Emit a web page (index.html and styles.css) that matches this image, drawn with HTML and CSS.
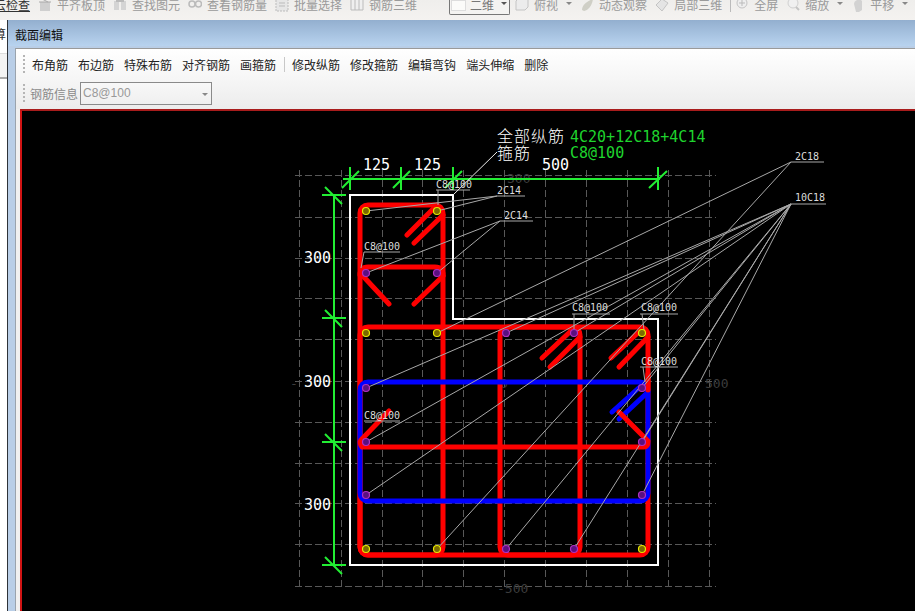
FILE: index.html
```html
<!DOCTYPE html>
<html lang="zh-CN">
<head>
<meta charset="utf-8">
<title>截面编辑</title>
<link rel="stylesheet" href="styles.css">
</head>
<body>
<header class="topbar">
  <span class="tb-text tb-first">云检查</span>
  <span class="tb-item"><svg class="tb-icon" viewBox="0 0 14 14"><rect x="2" y="4" width="10" height="9" fill="#cfcfcf"/><path d="M1 4h12M4 1l6 3" stroke="#aaa" fill="none"/></svg><span>平齐板顶</span></span>
  <span class="tb-item"><svg class="tb-icon" viewBox="0 0 14 14"><rect x="1" y="3" width="5" height="9" fill="#d4d4d4"/><rect x="8" y="3" width="5" height="9" fill="#d4d4d4"/><path d="M3 1h8v3H3z" fill="#bbb"/></svg><span>查找图元</span></span>
  <span class="tb-item"><svg class="tb-icon" viewBox="0 0 14 14"><circle cx="4" cy="6" r="3" fill="none" stroke="#bbb" stroke-width="1.5"/><circle cx="10.500" cy="6" r="3" fill="none" stroke="#bbb" stroke-width="1.5"/></svg><span>查看钢筋量</span></span>
  <span class="tb-item"><svg class="tb-icon" viewBox="0 0 14 14"><rect x="1" y="1" width="12" height="12" fill="#e6e6e6" stroke="#bbb" stroke-dasharray="2 1"/><path d="M4 5h6M4 8h6" stroke="#bbb"/></svg><span>批量选择</span></span>
  <span class="tb-item"><svg class="tb-icon" viewBox="0 0 14 14"><path d="M1 1h12v11H1zM5 1v11M9 1v11" fill="#efefef" stroke="#bbb"/></svg><span>钢筋三维</span></span>
  <span class="view-select"><i class="view-swatch"></i><span>二维</span><i class="arrow arrow-dark"></i></span>
  <span class="tb-item"><svg class="tb-icon" viewBox="0 0 14 14"><path d="M1 3l3-3h9v9l-3 3H1z" fill="#ececec" stroke="#c4c4c4"/></svg><span>俯视</span><i class="arrow"></i></span>
  <span class="tb-item"><svg class="tb-icon" viewBox="0 0 14 14"><path d="M2 12c0-5 5-9 11-11-1 6-4 11-9 12z" fill="#cfcfc6"/></svg><span>动态观察</span></span>
  <span class="tb-item"><svg class="tb-icon" viewBox="0 0 14 14"><path d="M1 7l6-6 6 4-6 8z" fill="#e4e4e4" stroke="#c4c4c4"/></svg><span>局部三维</span></span>
  <i class="tb-sep"></i>
  <span class="tb-item"><svg class="tb-icon" viewBox="0 0 14 14"><circle cx="7" cy="5" r="5" fill="#eee" stroke="#c4c4c4"/><path d="M4 5h6M7 2v6" stroke="#bbb"/></svg><span>全屏</span></span>
  <span class="tb-item"><svg class="tb-icon" viewBox="0 0 14 14"><circle cx="7" cy="5" r="5" fill="#f0f0f0" stroke="#d0d0d0"/><path d="M10 9l3 3" stroke="#c4c4c4" stroke-width="2"/></svg><span>缩放</span><i class="arrow"></i></span>
  <span class="tb-item"><svg class="tb-icon" viewBox="0 0 14 14"><path d="M3 6c0-4 6-6 8-3v9l-3 2H5z" fill="#d2d2d2"/></svg><span>平移</span><i class="arrow"></i></span>
  <span class="tb-item"><svg class="tb-icon" viewBox="0 0 14 14"><rect x="1" y="1" width="12" height="11" fill="#e0e0e0"/></svg></span>
</header>

<main class="main">
  <aside class="side">
    <div class="side-tab">算</div>
    <div class="side-gap"></div>
  </aside>
  <section class="window">
    <h1 class="window-title">截面编辑</h1>
    <div class="window-body">
      <div class="toolbars">
        <div class="tool-row tool-row-main">
          <i class="grip"></i>
          <span>布角筋</span><span>布边筋</span><span>特殊布筋</span><span>对齐钢筋</span><span>画箍筋</span>
          <i class="tool-sep"></i>
          <span>修改纵筋</span><span>修改箍筋</span><span>编辑弯钩</span><span>端头伸缩</span><span>删除</span>
        </div>
        <div class="tool-row tool-row-info">
          <i class="grip"></i>
          <label class="info-label">钢筋信息</label>
          <div class="info-select"><span>C8@100</span><i class="arrow"></i></div>
        </div>
      </div>
      <div class="canvas">
        <svg class="drawing" viewBox="22 111 893 500" width="893" height="500" xmlns="http://www.w3.org/2000/svg">
          <g class="grid">
            <path d="M299 170V590M341 170V590M382 170V590M422 170V590M463 170V590M504 170V590M545 170V590M586 170V590M627 170V590M668 170V590M709 170V590"/>
            <path d="M295 175H716M295 217H716M295 258H716M295 298H716M295 339H716M295 381H716M295 422H716M295 463H716M295 503H716M295 544H716M295 586H716"/>
          </g>
          <g class="faint">
            <text x="507" y="183">300</text>
            <text x="705" y="388">500</text>
            <text x="500" y="388">0</text>
            <text x="497" y="593">-500</text>
            <text x="290" y="388">-</text>
          </g>

          <path class="wall" d="M350 195H453V319H658V565H350Z"/>

          <g class="bar bar-red">
            <rect x="360" y="205" width="83" height="350" rx="8"/>
            <rect x="360" y="327" width="288" height="228" rx="8"/>
            <rect x="500" y="327" width="80" height="228" rx="8"/>
            <path d="M360 275Q360 267 368 267H435Q443 267 443 275"/>
            <path d="M437 205L407 235M443 215L414 243M362 275L389 304M443 276L414 304"/>
            <path d="M573 329L542 358M580 337L550 367M642 329L611 358M648 337L619 367"/>
          </g>
          <g class="bar bar-blue">
            <rect x="360" y="382" width="288" height="119" rx="8"/>
            <path d="M642 385L612 412M648 392L619 419"/>
          </g>
          <g class="bar bar-red">
            <path d="M648 374V390"/>
            <path d="M364 447H644Q648 447 648 441L619 412"/>
            <path d="M389 411L361 440Q359 443 362 447"/>
          </g>

          <g class="dim">
            <path d="M343 179H660M334 195V565"/>
            <path d="M350 167V190M342 188L359 171M401 167V190M393 188L410 171M453 167V190M445 188L462 171M658 167V190M649 188L667 171"/>
            <path d="M322 195H346M325 187L342 204M322 318H346M325 310L342 327M322 442H346M325 434L342 451M322 565H346M325 557L342 574"/>
          </g>

          <g class="lead">
            <path d="M497 196H525M497 196L366 211M497 196L437 211"/>
            <path d="M500 221H533M500 221L366 273M500 221L437 273"/>
            <path d="M436 190H470M438 190V205M364 252H400M364 252L361 268M364 421H400"/>
            <path d="M572 314H610M574 314V330M640 314H678M642 314L644 330M640 367H678M643 367L645 382"/>
            <path d="M791 162H824M791 162L437 333M791 162L437 549"/>
            <path d="M791 204H826M791 204L366 388M791 204L366 442M791 204L366 495M791 204L506 333M791 204L574 333M791 204L506 549M791 204L574 549M791 204L642 388M791 204L642 442M791 204L642 495"/>
          </g>
          <path class="lead-white" d="M497 152L453 195"/>

          <g class="dot dot-yellow">
            <circle cx="366" cy="211" r="3.500"/><circle cx="437" cy="211" r="3.500"/>
            <circle cx="366" cy="333" r="3.500"/><circle cx="437" cy="333" r="3.500"/><circle cx="642" cy="333" r="3.500"/>
            <circle cx="366" cy="549" r="3.500"/><circle cx="437" cy="549" r="3.500"/><circle cx="642" cy="549" r="3.500"/>
          </g>
          <g class="dot dot-purple">
            <circle cx="366" cy="273" r="3.500"/><circle cx="437" cy="273" r="3.500"/>
            <circle cx="506" cy="333" r="3.500"/><circle cx="574" cy="333" r="3.500"/>
            <circle cx="366" cy="388" r="3.500"/><circle cx="366" cy="442" r="3.500"/><circle cx="366" cy="495" r="3.500"/>
            <circle cx="642" cy="388" r="3.500"/><circle cx="642" cy="442" r="3.500"/><circle cx="642" cy="495" r="3.500"/>
            <circle cx="506" cy="549" r="3.500"/><circle cx="574" cy="549" r="3.500"/>
          </g>

          <g class="dim-text">
            <text x="363" y="170">125</text>
            <text x="414" y="170">125</text>
            <text x="542" y="170">500</text>
            <text x="304" y="263">300</text>
            <text x="304" y="387">300</text>
            <text x="304" y="510">300</text>
          </g>
          <g class="legend">
            <text x="497" y="142">全部纵筋</text>
            <text x="497" y="159">箍筋</text>
          </g>
          <g class="legend-value">
            <text x="570" y="142">4C20+12C18+4C14</text>
            <text x="570" y="158">C8@100</text>
          </g>
          <g class="tag">
            <text x="436" y="188">C8@100</text>
            <text x="497" y="194">2C14</text>
            <text x="504" y="219">2C14</text>
            <text x="364" y="250">C8@100</text>
            <text x="364" y="419">C8@100</text>
            <text x="572" y="311">C8@100</text>
            <text x="641" y="311">C8@100</text>
            <text x="641" y="365">C8@100</text>
            <text x="795" y="160">2C18</text>
            <text x="795" y="201">10C18</text>
          </g>
        </svg>
      </div>
    </div>
  </section>
</main>
</body>
</html>
```

FILE: styles.css
```css
* { box-sizing: border-box; }

html, body {
  margin: 0;
  height: 100%;
}

body {
  display: flex;
  flex-direction: column;
  width: 915px;
  height: 611px;
  overflow: hidden;
  background: #fff;
  font: 12px "Noto Sans CJK SC", "Liberation Sans", sans-serif;
  color: #222;
}

i { display: block; font-style: normal; }

/* top application toolbar, cut off by the window edge */
.topbar {
  display: flex;
  flex: none;
  gap: 8px;
  height: 20px;
  overflow: hidden;
  background: linear-gradient(#efeeec, #f4f2f0);
  color: #9a9a9a;
  line-height: 9px;
  white-space: nowrap;
}

.tb-first {
  margin-left: -6px;
  color: #333;
  text-decoration: underline;
}

.tb-item {
  display: flex;
  flex: none;
  gap: 5px;
}

.tb-icon {
  flex: none;
  width: 14px;
  height: 14px;
  margin-top: -2px;
}

.tb-sep {
  flex: none;
  width: 1px;
  height: 12px;
  margin-right: -4px;
  background: #bbb;
}

.arrow {
  flex: none;
  width: 0;
  height: 0;
  margin: 2px 0 0 3px;
  border-left: 3px solid transparent;
  border-right: 3px solid transparent;
  border-top: 3px solid #888;
}

.arrow-dark { border-top-color: #555; }

.view-select {
  display: flex;
  flex: none;
  gap: 4px;
  width: 61px;
  height: 15px;
  margin: 0 -3px 0 24px;
  border: 1px solid #777;
  border-top: 0;
  border-radius: 0 0 2px 2px;
  background: #f4f3f1;
  padding-left: 1px;
  color: #777;
}

.view-swatch {
  flex: none;
  width: 15px;
  height: 11px;
  background: #fbfbf9;
  border: 1px solid #ddd;
}

/* main area */
.main {
  display: flex;
  flex: 1;
  min-height: 0;
}

.side {
  display: flex;
  flex: none;
  flex-direction: column;
  width: 8px;
  border-right: 1px solid #2e3238;
  overflow: hidden;
  background: #fff;
}

.side-tab {
  height: 33px;
  padding-top: 6px;
  margin-left: -6px;
  width: 13px;
  color: #333;
  white-space: nowrap;
  line-height: 16px;
}

.side-gap {
  height: 26px;
  border-top: 1px solid #ddd;
  border-bottom: 2px solid #aaa;
  background: #f3f3f3;
}

.window {
  display: flex;
  flex: 1;
  flex-direction: column;
  min-width: 0;
  background: #b9cee7;
}

.window-title {
  flex: none;
  height: 26px;
  margin: 0;
  padding-left: 7px;
  background: linear-gradient(#93afcf, #b8d3ef);
  font-size: 12px;
  font-weight: 400;
  line-height: 30px;
  color: #111;
}

.window-body {
  display: flex;
  flex: 1;
  flex-direction: column;
  min-height: 0;
  margin: 2px 0 0 7px;
  border-top: 1px solid #9a9a9a;
  border-left: 1px solid #9aa3ad;
  background: #f0f0f0;
}

.toolbars {
  flex: none;
  height: 60px;
  background: linear-gradient(#fff, #f6f6f6 50%, #ececec);
}

.tool-row {
  display: flex;
  align-items: center;
  padding-left: 7px;
  white-space: nowrap;
}

.tool-row-main {
  gap: 10px;
  height: 30px;
  margin-bottom: 2px;
  color: #222;
}

.tool-row-info {
  gap: 5px;
  height: 24px;
  color: #8a8a8a;
}

.grip {
  flex: none;
  width: 2px;
  height: 18px;
  background: repeating-linear-gradient(#b5b5b5 0 2px, transparent 2px 4px);
}

.tool-row-main .grip { margin-right: -3px; }

.tool-sep {
  flex: none;
  width: 1px;
  height: 15px;
  margin: 0 -3px 0 -2px;
  background: #c8c8c8;
}

.info-select {
  display: flex;
  align-items: center;
  justify-content: space-between;
  width: 132px;
  height: 23px;
  margin-left: -3px;
  padding: 0 3px 0 2px;
  border: 1px solid #8a8a8a;
  background: linear-gradient(#f8f8f8, #efefef);
  font-family: "Liberation Sans", sans-serif;
  color: #999;
}

/* drawing area */
.canvas {
  flex: 1;
  min-height: 0;
  margin-left: 4px;
  overflow: hidden;
  border-top: 2px solid #a81c1c;
  border-left: 2px solid #d01414;
  background: #000;
}

.drawing { display: block; }

.grid path {
  fill: none;
  stroke: #585858;
  stroke-width: 1;
  stroke-dasharray: 7 3;
  shape-rendering: crispEdges;
}

.faint text {
  font: 13px "DejaVu Sans Mono", monospace;
  fill: #3c3c3c;
}

.wall {
  fill: none;
  stroke: #fff;
  stroke-width: 2;
}

.bar rect,
.bar path {
  fill: none;
  stroke-width: 5;
  stroke-linecap: round;
  stroke-linejoin: round;
}

.bar-red rect,
.bar-red path { stroke: #ff0000; }

.bar-blue rect,
.bar-blue path { stroke: #0000ff; }

.dim path {
  fill: none;
  stroke: #22ee33;
  stroke-width: 2;
}

.lead path {
  fill: none;
  stroke: #a8a8a8;
  stroke-width: 1;
}

.lead-white {
  fill: none;
  stroke: #eee;
  stroke-width: 1;
}

.dot circle { stroke-width: 1.2; }

.dot-yellow circle {
  fill: #7a6a00;
  stroke: #e8e800;
}

.dot-purple circle {
  fill: #5a1080;
  stroke: #b030c0;
}

.dim-text text {
  font: 15px "DejaVu Sans Mono", monospace;
  fill: #fff;
}

.legend text {
  font: 300 16px "Noto Sans CJK SC", sans-serif;
  letter-spacing: 1px;
  fill: #fff;
}

.legend-value text {
  font: 15px "DejaVu Sans Mono", monospace;
  fill: #1fd42e;
}

.tag text {
  font: 10px "DejaVu Sans Mono", monospace;
  fill: #dcdcdc;
}
```
